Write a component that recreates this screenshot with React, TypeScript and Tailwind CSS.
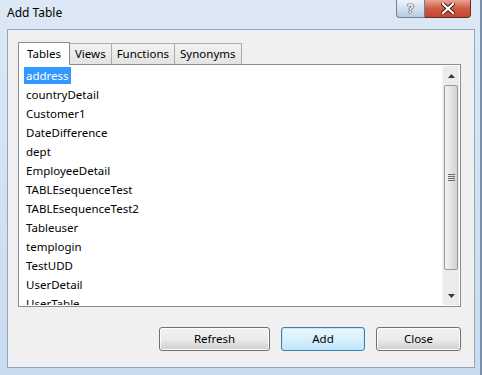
const TABS = ["Tables", "Views", "Functions", "Synonyms"];

const ITEMS = [
  "address",
  "countryDetail",
  "Customer1",
  "DateDifference",
  "dept",
  "EmployeeDetail",
  "TABLEsequenceTest",
  "TABLEsequenceTest2",
  "Tableuser",
  "templogin",
  "TestUDD",
  "UserDetail",
  "UserTable",
];

function CaptionButtons() {
  return (
    <div className="flex ml-auto mr-[9px] h-[18px]">
      <div className="w-[29px] h-[18px] rounded-bl-[4px] border border-t-0 border-[#6e7f96] bg-gradient-to-b from-[#eef3fa] via-[#d4e0ee] to-[#b9cbe2] flex items-center justify-center">
        <span className="text-[13px] font-bold leading-none text-white [text-shadow:0_0_1px_#222,0_0_1px_#222,0_0_1px_#222]">?</span>
      </div>
      <div className="w-[46px] h-[18px] rounded-br-[4px] border border-l-0 border-t-0 border-[#6b2a1f] bg-gradient-to-b from-[#e9a493] via-[#cf5a42] to-[#c44630] flex items-center justify-center">
        <svg width="14" height="11" viewBox="0 0 14 11">
          <path d="M2 1 L12 10 M12 1 L2 10" stroke="#3b1a14" strokeWidth="4" strokeLinecap="square" />
          <path d="M2 1 L12 10 M12 1 L2 10" stroke="#ffffff" strokeWidth="2.2" strokeLinecap="square" />
        </svg>
      </div>
    </div>
  );
}

function Scrollbar() {
  return (
    <div className="w-[17px] flex flex-col bg-[#ebebeb] border-l border-[#f4f4f4]">
      <div className="h-[19px] flex items-center justify-center">
        <svg width="7" height="4" viewBox="0 0 7 4">
          <path d="M0 4 L3.5 0 L7 4 Z" fill="#3a3a3a" />
        </svg>
      </div>
      <div className="h-[185px] mx-[1px] rounded-[2px] border border-[#9a9a9a] bg-gradient-to-r from-[#f3f3f3] via-[#e4e4e4] to-[#d2d2d2] flex items-center justify-center">
        <div className="flex flex-col gap-[1px]">
          <div className="w-[7px] h-[1px] bg-[#6c6c6c]" />
          <div className="w-[7px] h-[1px] bg-[#6c6c6c]" />
          <div className="w-[7px] h-[1px] bg-[#6c6c6c]" />
          <div className="w-[7px] h-[1px] bg-[#6c6c6c]" />
        </div>
      </div>
      <div className="flex-1" />
      <div className="h-[19px] flex items-center justify-center">
        <svg width="7" height="4" viewBox="0 0 7 4">
          <path d="M0 0 L3.5 4 L7 0 Z" fill="#3a3a3a" />
        </svg>
      </div>
    </div>
  );
}

function Button({ label, primary }: { label: string; primary?: boolean }) {
  return (
    <div
      className={
        "h-[24px] rounded-[3px] border flex items-center justify-center text-[11.5px] text-black " +
        (primary
          ? "border-[#3c7fb1] bg-gradient-to-b from-[#eaf6fd] via-[#d9f0fc] to-[#bee6fd] shadow-[inset_0_0_0_1px_#c6e6f7]"
          : "border-[#707070] bg-gradient-to-b from-[#f2f2f2] via-[#ebebeb] to-[#cfcfcf] shadow-[inset_0_0_0_1px_#fcfcfc]")
      }
    >
      {label}
    </div>
  );
}

export default function App() {
  return (
    <div
      className="w-[482px] h-[375px] flex flex-col bg-gradient-to-b from-[#dce8f5] to-[#c9dbef] border-r-[2px] border-[#7a8ea8] overflow-hidden"
      style={{ fontFamily: '"Noto Sans", "Open Sans", sans-serif' }}
    >
      <div className="h-[29px] flex items-start shrink-0">
        <span className="pl-[7px] pt-[4px] text-[12px] text-black">Add Table</span>
        <CaptionButtons />
      </div>
      <div className="ml-[7px] w-[468px] h-[339px] bg-[#f0f0f0] border border-[#8fa6c2] flex flex-col pl-[10px] pt-[11px]">
        <div className="flex items-end h-[23px]">
          {TABS.map((t, i) =>
            i === 0 ? (
              <div key={t} className="h-[23px] px-[8px] bg-white border border-b-0 border-[#898c95] text-[11.5px] flex items-center -mb-px z-10 relative">
                {t}
              </div>
            ) : (
              <div key={t} className="h-[21px] px-[5px] bg-gradient-to-b from-[#f2f2f2] to-[#e3e3e3] border border-b-0 border-l-0 border-[#acacac] text-[11.5px] flex items-center">
                {t}
              </div>
            )
          )}
        </div>
        <div className="w-[443px] h-[243px] bg-white border border-[#898c95] flex p-[1px]">
          <div className="flex-1 flex flex-col pl-[4px] overflow-hidden">
            {ITEMS.map((it, i) => (
              <div key={it} className="h-[19px] shrink-0 flex items-center text-[11.5px]">
                <span className={i === 0 ? "bg-[#3399ff] text-white px-[2px] h-[17px] flex items-center" : "text-black px-[2px]"}>{it}</span>
              </div>
            ))}
          </div>
          <Scrollbar />
        </div>
        <div className="flex gap-[11px] justify-end pr-[13px] pt-[20px]">
          <div className="w-[111px]"><Button label="Refresh" /></div>
          <div className="w-[84px]"><Button label="Add" primary /></div>
          <div className="w-[85px]"><Button label="Close" /></div>
        </div>
      </div>
    </div>
  );
}
